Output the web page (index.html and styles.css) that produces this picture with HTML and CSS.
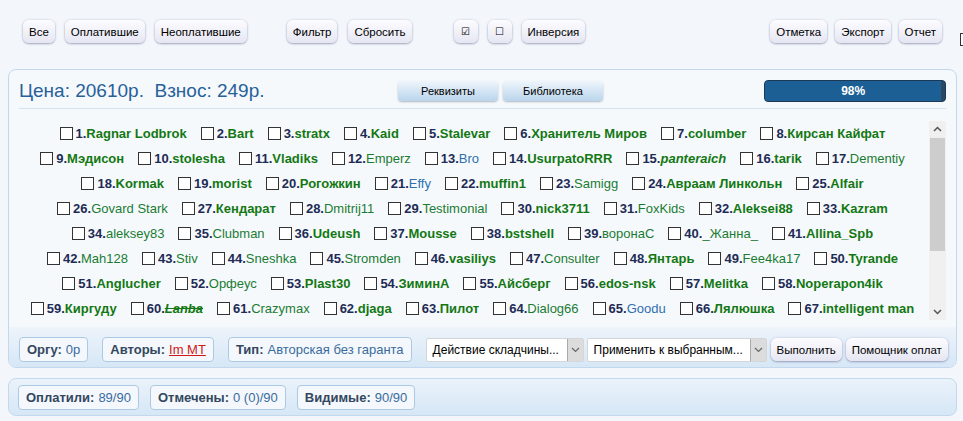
FILE: index.html
```html
<!DOCTYPE html>
<html lang="ru">
<head>
	<meta charset="UTF-8">
	<title>Складчина — участники</title>
	<link rel="stylesheet" href="styles.css">
</head>
<body>
	<menu class="toolbar">
		<div class="group">
			<button class="btn">Все</button>
			<button class="btn">Оплатившие</button>
			<button class="btn">Неоплатившие</button>
		</div>
		<div class="group group-filter">
			<button class="btn">Фильтр</button>
			<button class="btn">Сбросить</button>
		</div>
		<div class="group group-select">
			<button class="btn btn-icon">&#9745;</button>
			<button class="btn btn-icon">&#9744;</button>
			<button class="btn">Инверсия</button>
		</div>
		<div class="group group-right">
			<button class="btn">Отметка</button>
			<button class="btn">Экспорт</button>
			<button class="btn">Отчет</button>
		</div>
		<input class="edge-box" type="checkbox">
	</menu>

	<section class="panel">
		<header class="panel-head">
			<h1 class="price">Цена: 20610р.&nbsp; Взнос: 249р.</h1>
			<div class="tabs">
				<button class="tab-btn">Реквизиты</button>
				<button class="tab-btn">Библиотека</button>
			</div>
			<div class="progress">
				<div class="progress-fill" style="width: 98%">98%</div>
			</div>
		</header>

		<div class="list">
			<div class="rows">
				<div class="row">
					<label class="member"><input type="checkbox"><b>1.</b><span class="nick">Ragnar Lodbrok</span></label>
					<label class="member"><input type="checkbox"><b>2.</b><span class="nick">Bart</span></label>
					<label class="member"><input type="checkbox"><b>3.</b><span class="nick">stratx</span></label>
					<label class="member"><input type="checkbox"><b>4.</b><span class="nick">Kaid</span></label>
					<label class="member"><input type="checkbox"><b>5.</b><span class="nick">Stalevar</span></label>
					<label class="member"><input type="checkbox"><b>6.</b><span class="nick">Хранитель Миров</span></label>
					<label class="member"><input type="checkbox"><b>7.</b><span class="nick">columber</span></label>
					<label class="member"><input type="checkbox"><b>8.</b><span class="nick">Кирсан Кайфат</span></label>
				</div>
				<div class="row">
					<label class="member"><input type="checkbox"><b>9.</b><span class="nick">Мэдисон</span></label>
					<label class="member"><input type="checkbox"><b>10.</b><span class="nick">stolesha</span></label>
					<label class="member"><input type="checkbox"><b>11.</b><span class="nick">Vladiks</span></label>
					<label class="member"><input type="checkbox"><b>12.</b><span class="nick plain">Emperz</span></label>
					<label class="member"><input type="checkbox"><b>13.</b><span class="nick plain blue">Bro</span></label>
					<label class="member"><input type="checkbox"><b>14.</b><span class="nick">UsurpatoRRR</span></label>
					<label class="member"><input type="checkbox"><b>15.</b><span class="nick italic">panteraich</span></label>
					<label class="member"><input type="checkbox"><b>16.</b><span class="nick">tarik</span></label>
					<label class="member"><input type="checkbox"><b>17.</b><span class="nick plain">Dementiy</span></label>
				</div>
				<div class="row">
					<label class="member"><input type="checkbox"><b>18.</b><span class="nick">Kormak</span></label>
					<label class="member"><input type="checkbox"><b>19.</b><span class="nick">morist</span></label>
					<label class="member"><input type="checkbox"><b>20.</b><span class="nick">Рогожкин</span></label>
					<label class="member"><input type="checkbox"><b>21.</b><span class="nick plain blue">Effy</span></label>
					<label class="member"><input type="checkbox"><b>22.</b><span class="nick">muffin1</span></label>
					<label class="member"><input type="checkbox"><b>23.</b><span class="nick plain">Samigg</span></label>
					<label class="member"><input type="checkbox"><b>24.</b><span class="nick">Авраам Линкольн</span></label>
					<label class="member"><input type="checkbox"><b>25.</b><span class="nick">Alfair</span></label>
				</div>
				<div class="row">
					<label class="member"><input type="checkbox"><b>26.</b><span class="nick plain">Govard Stark</span></label>
					<label class="member"><input type="checkbox"><b>27.</b><span class="nick">Кендарат</span></label>
					<label class="member"><input type="checkbox"><b>28.</b><span class="nick plain">Dmitrij11</span></label>
					<label class="member"><input type="checkbox"><b>29.</b><span class="nick plain">Testimonial</span></label>
					<label class="member"><input type="checkbox"><b>30.</b><span class="nick">nick3711</span></label>
					<label class="member"><input type="checkbox"><b>31.</b><span class="nick plain">FoxKids</span></label>
					<label class="member"><input type="checkbox"><b>32.</b><span class="nick">Aleksei88</span></label>
					<label class="member"><input type="checkbox"><b>33.</b><span class="nick">Kazram</span></label>
				</div>
				<div class="row">
					<label class="member"><input type="checkbox"><b>34.</b><span class="nick plain">aleksey83</span></label>
					<label class="member"><input type="checkbox"><b>35.</b><span class="nick plain">Clubman</span></label>
					<label class="member"><input type="checkbox"><b>36.</b><span class="nick">Udeush</span></label>
					<label class="member"><input type="checkbox"><b>37.</b><span class="nick">Mousse</span></label>
					<label class="member"><input type="checkbox"><b>38.</b><span class="nick">bstshell</span></label>
					<label class="member"><input type="checkbox"><b>39.</b><span class="nick plain">воронаС</span></label>
					<label class="member"><input type="checkbox"><b>40.</b><span class="nick plain">_Жанна_</span></label>
					<label class="member"><input type="checkbox"><b>41.</b><span class="nick">Allina_Spb</span></label>
				</div>
				<div class="row">
					<label class="member"><input type="checkbox"><b>42.</b><span class="nick plain">Mah128</span></label>
					<label class="member"><input type="checkbox"><b>43.</b><span class="nick plain">Stiv</span></label>
					<label class="member"><input type="checkbox"><b>44.</b><span class="nick plain">Sneshka</span></label>
					<label class="member"><input type="checkbox"><b>45.</b><span class="nick plain">Stromden</span></label>
					<label class="member"><input type="checkbox"><b>46.</b><span class="nick">vasiliys</span></label>
					<label class="member"><input type="checkbox"><b>47.</b><span class="nick plain">Consulter</span></label>
					<label class="member"><input type="checkbox"><b>48.</b><span class="nick">Янтарь</span></label>
					<label class="member"><input type="checkbox"><b>49.</b><span class="nick plain">Fee4ka17</span></label>
					<label class="member"><input type="checkbox"><b>50.</b><span class="nick">Tyrande</span></label>
				</div>
				<div class="row">
					<label class="member"><input type="checkbox"><b>51.</b><span class="nick">Anglucher</span></label>
					<label class="member"><input type="checkbox"><b>52.</b><span class="nick plain">Орфеус</span></label>
					<label class="member"><input type="checkbox"><b>53.</b><span class="nick">Plast30</span></label>
					<label class="member"><input type="checkbox"><b>54.</b><span class="nick">ЗиминА</span></label>
					<label class="member"><input type="checkbox"><b>55.</b><span class="nick">Айсберг</span></label>
					<label class="member"><input type="checkbox"><b>56.</b><span class="nick">edos-nsk</span></label>
					<label class="member"><input type="checkbox"><b>57.</b><span class="nick">Melitka</span></label>
					<label class="member"><input type="checkbox"><b>58.</b><span class="nick">Noperapon4ik</span></label>
				</div>
				<div class="row">
					<label class="member"><input type="checkbox"><b>59.</b><span class="nick">Киргуду</span></label>
					<label class="member"><input type="checkbox"><b>60.</b><span class="nick italic struck">Lanba</span></label>
					<label class="member"><input type="checkbox"><b>61.</b><span class="nick plain">Crazymax</span></label>
					<label class="member"><input type="checkbox"><b>62.</b><span class="nick">djaga</span></label>
					<label class="member"><input type="checkbox"><b>63.</b><span class="nick">Пилот</span></label>
					<label class="member"><input type="checkbox"><b>64.</b><span class="nick plain">Dialog66</span></label>
					<label class="member"><input type="checkbox"><b>65.</b><span class="nick plain blue">Goodu</span></label>
					<label class="member"><input type="checkbox"><b>66.</b><span class="nick">Лялюшка</span></label>
					<label class="member"><input type="checkbox"><b>67.</b><span class="nick">intelligent man</span></label>
				</div>
			</div>
			<div class="scrollbar">
				<svg class="arrow" viewBox="0 0 17 17"><polyline points="5,10 8.5,6.5 12,10" fill="none" stroke="#555" stroke-width="1.5"></polyline></svg>
				<div class="thumb"></div>
				<div class="track"></div>
				<svg class="arrow" viewBox="0 0 17 17"><polyline points="5,7 8.5,10.5 12,7" fill="none" stroke="#555" stroke-width="1.5"></polyline></svg>
			</div>
		</div>

		<footer class="panel-foot">
			<span class="chip"><b>Оргу:</b> 0р</span>
			<span class="chip"><b>Авторы:</b> <a class="author" href="#">Im MT</a></span>
			<span class="chip"><b>Тип:</b> Авторская без гаранта</span>
			<div class="select select-action">
				<span class="select-text">Действие складчины...</span>
				<span class="select-arrow"><svg viewBox="0 0 9 6"><polyline points="1,1 4.5,4.5 8,1" fill="none" stroke="#666" stroke-width="1.2"></polyline></svg></span>
			</div>
			<div class="select select-apply">
				<span class="select-text">Применить к выбранным...</span>
				<span class="select-arrow"><svg viewBox="0 0 9 6"><polyline points="1,1 4.5,4.5 8,1" fill="none" stroke="#666" stroke-width="1.2"></polyline></svg></span>
			</div>
			<button class="btn">Выполнить</button>
			<button class="btn">Помощник оплат</button>
		</footer>
	</section>

	<section class="stats">
		<span class="chip"><b>Оплатили:</b> 89/90</span>
		<span class="chip"><b>Отмечены:</b> 0 (0)/90</span>
		<span class="chip"><b>Видимые:</b> 90/90</span>
	</section>
</body>
</html>
```

FILE: styles.css
```css
html {
	box-sizing: border-box;
}

*, *:before, *:after {
	box-sizing: inherit;
}

body {
	margin: 0;
	padding: 0;
	overflow: hidden;
	background: #f3f7fb;
	font-family: "Liberation Sans", Arial, sans-serif;
	color: #000;
}

/* top toolbar */

.toolbar {
	display: flex;
	align-items: flex-start;
	height: 43px;
	margin: 0;
	padding: 20px 0 0 23px;
}

.group {
	display: flex;
	gap: 10px;
}

.group-filter {
	margin-left: 40px;
	gap: 11px;
}

.group-select {
	margin-left: 42px;
}

.group-right {
	margin-left: auto;
	gap: 8px;
}

.btn {
	flex-shrink: 0;
	height: 23px;
	padding: 0 6px;
	border: 0;
	border-radius: 6px;
	background: linear-gradient(#fcfcff, #e6e6f3);
	box-shadow: 0 1px 2px rgba(70, 70, 110, .4), 0 0 3px rgba(160, 160, 210, .4);
	font-family: inherit;
	font-size: 11.5px;
	color: #000;
	white-space: nowrap;
}

.btn-icon {
	width: 24px;
	padding: 0;
	font-family: "DejaVu Sans", sans-serif;
	font-size: 10px;
}

.edge-box {
	-webkit-appearance: none;
	appearance: none;
	flex-shrink: 0;
	width: 13px;
	height: 13px;
	margin: 13px -10px 0 18px;
	border: 1px solid #333;
	background: #fff;
}

/* main panel */

.panel {
	margin: 26px 6px 0 8px;
	border: 1px solid #c3d8ec;
	border-radius: 8px;
	background: #f6f9fc;
	overflow: hidden;
}

.panel-head {
	display: flex;
	align-items: center;
	margin: 0 10px;
	padding: 10px 0 6px;
	border-bottom: 1px solid #d3e3f1;
}

.price {
	width: 379px;
	margin: 0;
	font-size: 19px;
	font-weight: normal;
	line-height: 22px;
	color: #26619a;
	white-space: nowrap;
}

.tabs {
	display: flex;
	gap: 5px;
}

.tab-btn {
	width: 100px;
	height: 20px;
	padding: 0;
	border: 0;
	border-radius: 4px;
	background: linear-gradient(#eef5fc, #bad5ec);
	box-shadow: 0 1px 2px rgba(40, 60, 90, .35);
	font-family: inherit;
	font-size: 11px;
	color: #000;
}

.progress {
	width: 182px;
	height: 22px;
	margin-left: auto;
	border: 1px solid #1b3a57;
	border-radius: 4px;
	background: #2b4761;
	overflow: hidden;
}

.progress-fill {
	height: 100%;
	background: #1b5f94;
	color: #fff;
	font-size: 12px;
	font-weight: bold;
	line-height: 20px;
	text-align: center;
}

/* members list */

.list {
	display: flex;
	margin: 0 10px;
	padding-top: 12px;
}

.rows {
	flex: 1;
}

.row {
	display: flex;
	justify-content: center;
	gap: 14px;
	height: 25px;
	align-items: center;
	white-space: nowrap;
}

.member {
	display: flex;
	align-items: center;
	font-size: 13px;
	font-weight: bold;
	color: #1d2b55;
}

.member input {
	-webkit-appearance: none;
	appearance: none;
	width: 13px;
	height: 13px;
	margin: 0 3px 0 0;
	border: 1px solid #333;
	background: #fff;
}

.nick {
	color: #137813;
}

.nick.plain {
	font-weight: normal;
	color: #1a7c33;
}

.nick.blue {
	color: #2f6fae;
}

.nick.italic {
	font-style: italic;
}

.nick.struck {
	text-decoration: line-through;
}

.scrollbar {
	display: flex;
	flex-direction: column;
	width: 17px;
	height: 199px;
	margin-left: 3px;
	background: #f0f0f0;
}

.arrow {
	display: block;
	width: 17px;
	height: 17px;
}

.thumb {
	height: 113px;
	margin: 0 1px;
	background: #cdcdcd;
}

.track {
	flex: 1;
}

/* panel footer */

.panel-foot {
	display: flex;
	align-items: center;
	margin-top: 6px;
	padding: 10px 10px 5px;
	background: linear-gradient(#edf4fb, #d6e7f6);
}

.chip {
	display: inline-flex;
	flex-shrink: 0;
	align-items: center;
	gap: 4px;
	height: 25px;
	margin-right: 14px;
	padding: 0 7px;
	border: 1px solid #acc9e4;
	border-radius: 4px;
	background: #f4f8fc;
	font-size: 13px;
	color: #3a6b9c;
	white-space: nowrap;
}

.chip b {
	color: #33475e;
}

.author {
	color: #d01818;
}

.select {
	display: flex;
	flex-shrink: 0;
	align-items: center;
	height: 24px;
	border: 1px solid #d5d5d5;
	border-radius: 2px;
	background: #fff;
	font-size: 12px;
}

.select-action {
	width: 158px;
}

.select-apply {
	width: 180px;
	margin: 0 4px 0 3px;
}

.select-text {
	flex: 1;
	padding-left: 6px;
	white-space: nowrap;
	overflow: hidden;
}

.select-arrow {
	display: flex;
	align-items: center;
	justify-content: center;
	width: 16px;
	height: 22px;
	border-left: 1px solid #aaa;
	background: #dcdcdc;
}

.select-arrow svg {
	width: 9px;
	height: 6px;
}

.panel-foot .btn + .btn {
	margin-left: 4px;
}

/* stats bar */

.stats {
	display: flex;
	margin: 10px 6px 0 8px;
	padding: 6px 9px 5px;
	border: 1px solid #c3d8ec;
	border-radius: 8px;
	background: linear-gradient(#eaf2fa, #d6e7f6);
}

.stats .chip {
	margin-right: 11px;
}
```
